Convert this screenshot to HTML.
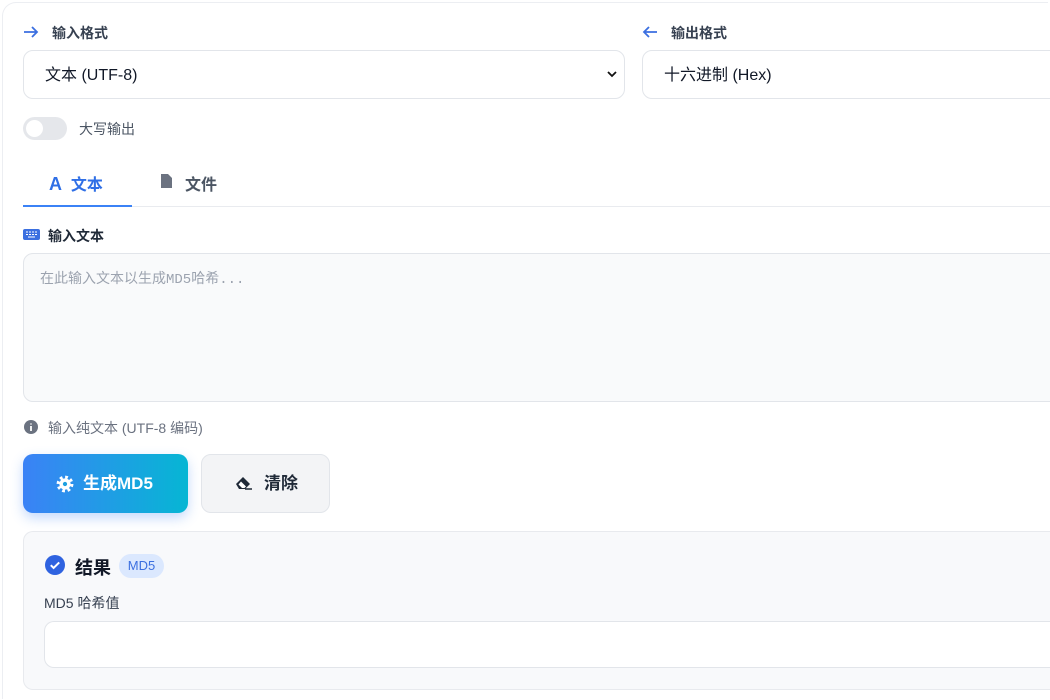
<!DOCTYPE html>
<html style="height:700px;overflow:hidden"><head><meta charset="utf-8"><style>
*{box-sizing:border-box;margin:0;padding:0}
html,body{width:1050px;height:700px;overflow:hidden}
body{background:#fff;font-family:"Liberation Sans","Noto Sans CJK SC",sans-serif;color:#1f2937;position:relative}
.card{position:absolute;left:2px;top:2px;width:1046px;height:697px;border:1px solid #eceef2;border-right:none;border-bottom:none;border-radius:14px 0 0 0}
.a{position:absolute}
.lbl{font-size:14px;font-weight:bold;color:#374151}
.sel{border:1px solid #e2e5ea;border-radius:10px;background:#fff;font-size:16px;color:#111827;padding-left:21px;line-height:49px}
</style></head><body>
<div class="card"></div>
<svg class="a" style="left:23px;top:25px" width="16" height="14" viewBox="0 0 16 14"><path d="M1 7H14M9 2L14 7L9 12" stroke="#3b6fe0" stroke-width="1.8" fill="none"/></svg>
<div class="a lbl" style="left:52px;top:23px">输入格式</div>
<div class="a sel" style="left:23px;top:50px;width:602px;height:49px">文本 (UTF-8)</div>
<svg class="a" style="left:607px;top:70px" width="10" height="8" viewBox="0 0 10 8"><path d="M1 2L5 6L9 2" stroke="#111" stroke-width="1.8" fill="none"/></svg>
<svg class="a" style="left:642px;top:25px" width="16" height="14" viewBox="0 0 16 14"><path d="M15 7H2M7 2L2 7L7 12" stroke="#3b6fe0" stroke-width="1.8" fill="none"/></svg>
<div class="a lbl" style="left:671px;top:23px">输出格式</div>
<div class="a sel" style="left:642px;top:50px;width:420px;height:49px">十六进制 (Hex)</div>
<div class="a" style="left:23px;top:117px;width:44px;height:23px;border-radius:12px;background:#e5e7eb"><div style="position:absolute;left:3px;top:3px;width:17px;height:17px;border-radius:50%;background:#fff"></div></div>
<div class="a" style="left:79px;top:119px;font-size:14px;color:#4b5563">大写输出</div>
<div class="a" style="left:23px;top:206px;width:1027px;height:1px;background:#e9ebef"></div>
<div class="a" style="left:23px;top:205px;width:109px;height:2px;background:#3b82f6"></div>
<div class="a" style="left:49px;top:171px;font-size:16px;font-weight:bold;color:#2f6fe6"><span style="font-size:18px">A</span>&nbsp; 文本</div>
<svg class="a" style="left:160px;top:173px" width="13" height="16" viewBox="0 0 13 16"><path d="M1 1H8L12 5V15H1Z" fill="#6b7280"/></svg>
<div class="a" style="left:185px;top:171px;font-size:16px;font-weight:bold;color:#4b5563">文件</div>
<svg class="a" style="left:23px;top:229px" width="17" height="11" viewBox="0 0 17 11"><rect width="17" height="11" rx="2" fill="#3b6fe0"/><path d="M3 3h2M6 3h2M9 3h2M12 3h2M3 5.5h2M6 5.5h2M9 5.5h2M12 5.5h2M5 8h7" stroke="#fff" stroke-width="1"/></svg>
<div class="a lbl" style="left:48px;top:226px;color:#1f2937">输入文本</div>
<div class="a" style="left:23px;top:253px;width:1040px;height:149px;border:1px solid #e2e5ea;border-radius:10px;background:#f9fafb;padding:14px 16px;font-family:'Liberation Mono','Noto Sans CJK SC',monospace;font-size:14px;color:#9ca3af">在此输入文本以生成MD5哈希...</div>
<svg class="a" style="left:24px;top:420px" width="14" height="14" viewBox="0 0 14 14"><circle cx="7" cy="7" r="7" fill="#6b7280"/><path d="M7 6V11M7 3.5V4.5" stroke="#fff" stroke-width="1.8"/></svg>
<div class="a" style="left:48px;top:418px;font-size:14px;color:#6b7280">输入纯文本 (UTF-8 编码)</div>
<div class="a" style="left:23px;top:454px;width:165px;height:59px;border-radius:10px;background:linear-gradient(90deg,#3b82f6,#06b6d4);box-shadow:0 5px 12px rgba(59,130,246,.3);color:#fff;font-size:17px;font-weight:bold;line-height:59px;padding-left:60px">生成MD5</div>
<svg class="a" style="left:56px;top:475px" width="18" height="18" viewBox="0 0 16 16"><circle cx="8" cy="8" r="6" fill="none" stroke="#fff" stroke-width="3" stroke-dasharray="2.4 2.3"/><circle cx="8" cy="8" r="5" fill="#fff"/><circle cx="8" cy="8" r="1.9" fill="#1ea0e0"/></svg>
<div class="a" style="left:201px;top:454px;width:129px;height:59px;border-radius:10px;background:#f3f4f6;border:1px solid #e2e5ea;color:#1f2937;font-size:17px;font-weight:bold;line-height:57px;padding-left:62px">清除</div>
<svg class="a" style="left:235px;top:476px" width="18" height="14" viewBox="0 0 18 14"><path d="M1 8L8 1L15 8L10 13H4Z" fill="#1f2937"/><path d="M3.5 8.5L7 12H9.5L11 10.5L6 5.5Z" fill="#fff"/><path d="M10 13H17" stroke="#1f2937" stroke-width="1.5"/></svg>
<div class="a" style="left:23px;top:531px;width:1027px;height:159px;border:1px solid #e8eaee;border-right:none;border-radius:10px 0 0 10px;background:#f8f9fb"></div>
<svg class="a" style="left:45px;top:555px" width="20" height="20" viewBox="0 0 20 20"><circle cx="10" cy="10" r="10" fill="#2f63e0"/><path d="M5.8 10.2L8.6 13L14.2 7.4" stroke="#fff" stroke-width="2" fill="none"/></svg>
<div class="a" style="left:75px;top:554px;font-size:18px;font-weight:bold;color:#111827">结果</div>
<div class="a" style="left:119px;top:554px;width:45px;height:24px;border-radius:12px;background:#dbe8fe;color:#3b6fe0;font-size:13px;line-height:24px;text-align:center">MD5</div>
<div class="a" style="left:44px;top:593px;font-size:14px;color:#374151">MD5 哈希值</div>
<div class="a" style="left:44px;top:621px;width:1006px;height:47px;border:1px solid #e2e5ea;border-right:none;border-radius:10px 0 0 10px;background:#fff"></div>
</body></html>
